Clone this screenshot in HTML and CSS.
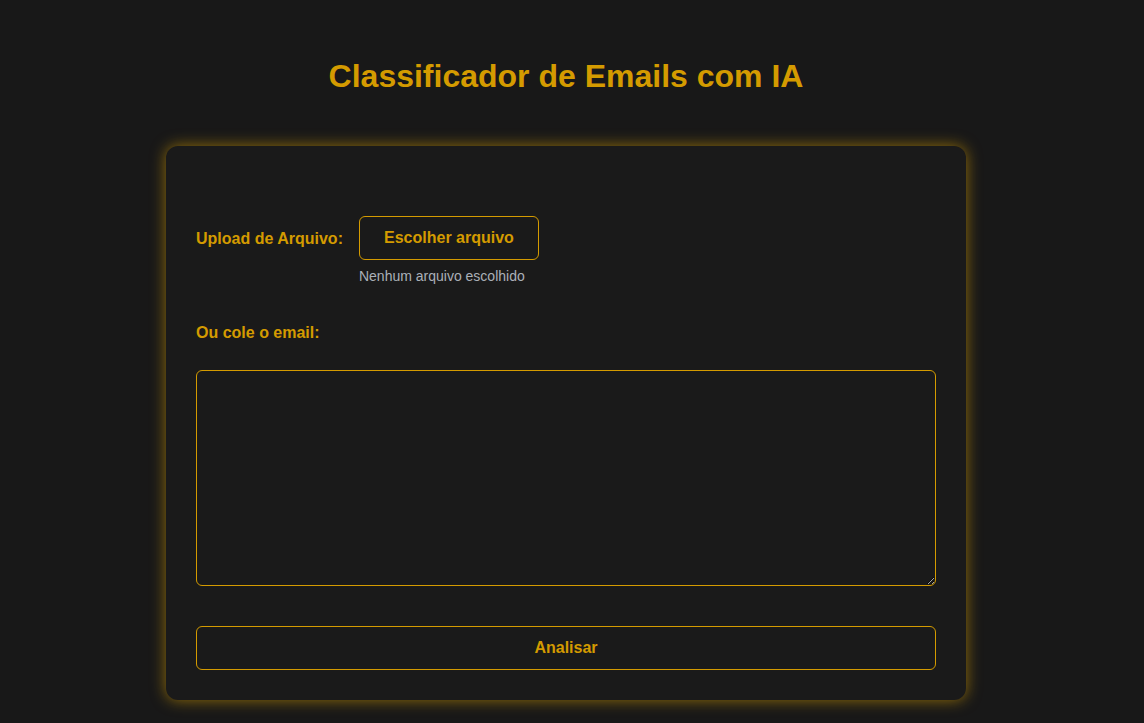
FILE: index.html
```html
<!DOCTYPE html>
<html lang="pt">
<head>
<meta charset="utf-8">
<title>Classificador de Emails com IA</title>
<link rel="stylesheet" href="styles.css">
</head>
<body>
<main class="page">
  <h1 class="title">Classificador de Emails com IA</h1>
  <form class="card">
    <div class="upload-row">
      <label class="label">Upload de Arquivo:</label>
      <div class="file-col">
        <button type="button" class="btn file-btn">Escolher arquivo</button>
        <span class="file-name">Nenhum arquivo escolhido</span>
      </div>
    </div>
    <label class="label paste-label">Ou cole o email:</label>
    <textarea class="email-text"></textarea>
    <button type="button" class="btn submit-btn">Analisar</button>
  </form>
</main>
</body>
</html>
```
FILE: styles.css
```css
* { box-sizing: border-box; }
html, body {
  margin: 0;
  background: #181818;
  font-family: "Liberation Sans", Arial, sans-serif;
  color: #d49b00;
}
.page {
  display: flex;
  flex-direction: column;
  align-items: center;
  padding-top: 58px;
  padding-right: 12px;
  padding-bottom: 30px;
}
.title {
  margin: 0;
  font-size: 32px;
  line-height: 37px;
  font-weight: bold;
  color: #d49b00;
}
.card {
  margin-top: 51px;
  width: 800px;
  padding: 70px 30px 30px;
  background: #1a1a1a;
  border-radius: 12px;
  box-shadow: 0 0 15px rgba(212, 155, 0, 0.65);
  display: flex;
  flex-direction: column;
}
.upload-row {
  display: flex;
  align-items: flex-start;
  gap: 16px;
}
.label {
  font-size: 16px;
  font-weight: bold;
  line-height: 18px;
  color: #d49b00;
}
.upload-row .label { margin-top: 14px; }
.file-col {
  display: flex;
  flex-direction: column;
  gap: 8px;
}
.btn {
  background: transparent;
  border: 1px solid #d49b00;
  border-radius: 6px;
  color: #d49b00;
  font-family: "Liberation Sans", Arial, sans-serif;
  font-size: 16px;
  font-weight: bold;
  height: 44px;
  padding: 0;
}
.file-btn { width: 180px; }
.file-name {
  font-size: 14px;
  line-height: 16px;
  color: #aab0b8;
}
.paste-label { margin-top: 40px; }
.email-text {
  margin-top: 28px;
  width: 100%;
  height: 216px;
  background: transparent;
  border: 1px solid #d49b00;
  border-radius: 6px;
  color: #ddd;
  resize: vertical;
}
.submit-btn {
  margin-top: 40px;
  width: 100%;
}
```
